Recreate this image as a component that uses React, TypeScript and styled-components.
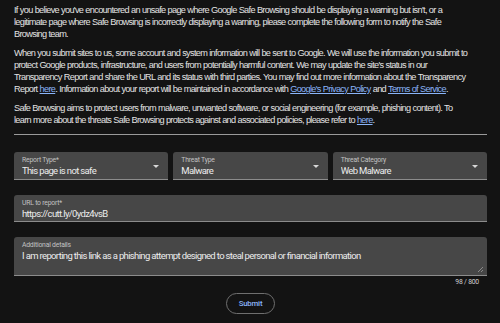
import React from 'react';
import styled, { createGlobalStyle } from 'styled-components';

const GlobalStyle = createGlobalStyle`
  html, body {
    margin: 0;
    padding: 0;
    background: #131313;
  }
`;

type FieldProps = {
  label: string;
  value: string;
};

function SelectField({ label, value }: FieldProps) {
  return (
    <Field height={28}>
      <Label>{label}</Label>
      <Value>{value}</Value>
      <Arrow />
    </Field>
  );
}

export default function App() {
  return (
    <Page>
      <GlobalStyle />
      <Para>
        If you believe you've encountered an unsafe page where Google Safe Browsing should be displaying a warning but isn't, or a<br />
        legitimate page where Safe Browsing is incorrectly displaying a warning, please complete the following form to notify the Safe<br />
        Browsing team.
      </Para>
      <Para>
        When you submit sites to us, some account and system information will be sent to Google. We will use the information you submit to<br />
        protect Google products, infrastructure, and users from potentially harmful content. We may update the site's status in our<br />
        Transparency Report and share the URL and its status with third parties. You may find out more information about the Transparency<br />
        Report <Link>here</Link>. Information about your report will be maintained in accordance with <Link>Google's Privacy Policy</Link> and{' '}
        <Link>Terms of Service</Link>.
      </Para>
      <Para>
        Safe Browsing aims to protect users from malware, unwanted software, or social engineering (for example, phishing content). To<br />
        learn more about the threats Safe Browsing protects against and associated policies, please refer to <Link>here</Link>.
      </Para>
      <Divider />
      <Form onSubmit={(e) => e.preventDefault()}>
        <SelectRow>
          <SelectField label="Report Type*" value="This page is not safe" />
          <SelectField label="Threat Type" value="Malware" />
          <SelectField label="Threat Category" value="Web Malware" />
        </SelectRow>
        <Field height={27}>
          <Label>URL to report*</Label>
          <Value>https://cutt.ly/0ydz4vsB</Value>
        </Field>
        <Field height={39}>
          <Label>Additional details</Label>
          <Value>I am reporting this link as a phishing attempt designed to steal personal or financial information</Value>
          <Resize />
        </Field>
        <Counter>98 / 800</Counter>
        <ButtonRow>
          <SubmitButton type="submit">Submit</SubmitButton>
        </ButtonRow>
      </Form>
    </Page>
  );
}

const Page = styled.div`
  padding: 4px 13px 0 14px;
  font-family: 'Liberation Sans', Arial, sans-serif;
  color: #e3e3e3;
`;

const Para = styled.p`
  margin: 0 0 7px;
  font-size: 9.2px;
  line-height: 12px;
  letter-spacing: -0.68px;
  word-spacing: 0.2px;
  white-space: nowrap;
`;

const Link = styled.a`
  color: #8ab4f8;
  text-decoration: underline;
  cursor: pointer;
`;

const Divider = styled.div`
  height: 1px;
  background: #9a9a9a;
  margin: 8px 0 17px;
`;

const Form = styled.form`
  display: flex;
  flex-direction: column;
  gap: 15px;
  font-family: Roboto, 'Liberation Sans', sans-serif;
`;

const SelectRow = styled.div`
  display: grid;
  grid-template-columns: 1fr 1fr 1fr;
  gap: 5px;
`;

const Field = styled.div<{ height: number }>`
  position: relative;
  box-sizing: border-box;
  height: ${(p) => p.height}px;
  background: #474747;
  border-bottom: 1px solid #8c8c8c;
  border-radius: 3px 3px 0 0;
  padding: 4px 8px 0 8px;
`;

const Label = styled.div`
  font-size: 6.8px;
  line-height: 8px;
  letter-spacing: -0.2px;
  color: #c2c2c2;
`;

const Value = styled.div`
  font-size: 9.5px;
  line-height: 13px;
  letter-spacing: -0.65px;
  color: #ececec;
  white-space: nowrap;
  overflow: hidden;
`;

const Arrow = styled.span`
  position: absolute;
  right: 9px;
  top: 13px;
  width: 0;
  height: 0;
  border-left: 3px solid transparent;
  border-right: 3px solid transparent;
  border-top: 3px solid #d8d8d8;
`;

const Resize = styled.span`
  position: absolute;
  right: 4px;
  bottom: 3px;
  width: 5px;
  height: 5px;
  background: linear-gradient(135deg, transparent 45%, #8a8a8a 45%, #8a8a8a 55%, transparent 55%, transparent 75%, #8a8a8a 75%, #8a8a8a 85%, transparent 85%);
`;

const Counter = styled.div`
  margin-top: -13px;
  padding-right: 8px;
  text-align: right;
  font-size: 6.8px;
  line-height: 8px;
  letter-spacing: -0.2px;
  color: #cfcfcf;
`;

const ButtonRow = styled.div`
  display: flex;
  justify-content: center;
  margin-top: -8px;
`;

const SubmitButton = styled.button`
  box-sizing: border-box;
  width: 49px;
  height: 21px;
  border-radius: 11px;
  border: 1px solid #6f6f6f;
  background: transparent;
  color: #8ab4f8;
  font-family: Roboto, sans-serif;
  font-size: 7.8px;
  font-weight: 500;
  letter-spacing: -0.2px;
  cursor: pointer;
`;
